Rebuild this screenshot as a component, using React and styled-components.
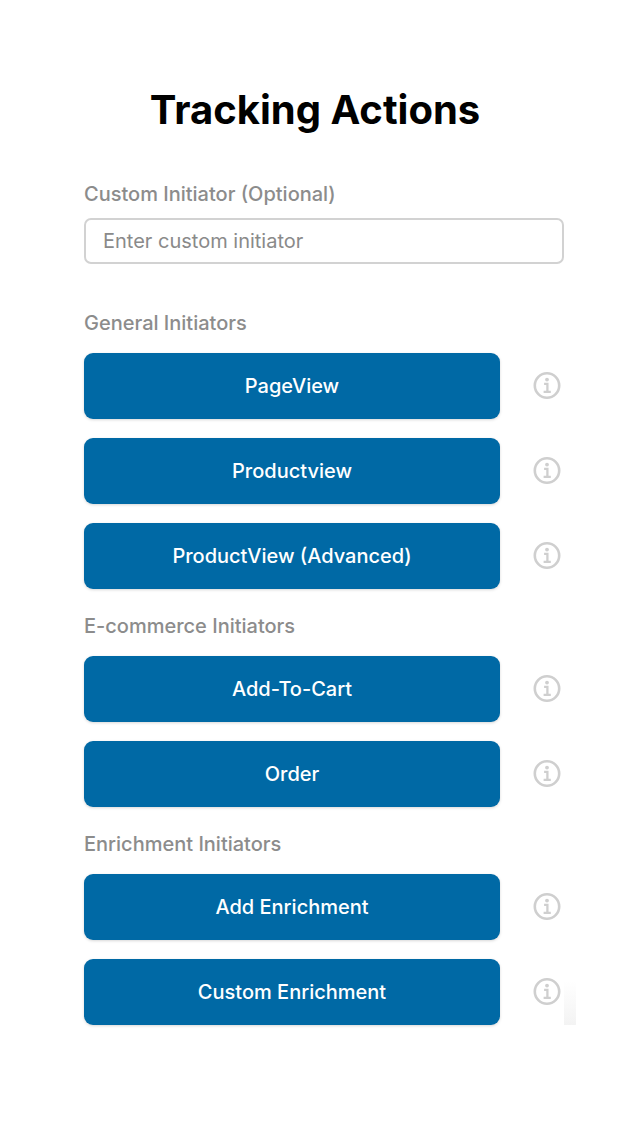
import React from 'react'
import styled, { createGlobalStyle } from 'styled-components'

const GlobalStyle = createGlobalStyle`
  * {
    box-sizing: border-box;
  }
  body {
    margin: 0;
    background: #fff;
    font-family: Inter, 'Liberation Sans', sans-serif;
  }
`

const Panel = styled.main`
  position: relative;
  margin: 0 64px 114px 72px;
  padding: 84px 12px 0;

  /* soft edge beside the last row */
  &::after {
    content: '';
    position: absolute;
    right: 0;
    bottom: 0;
    width: 12px;
    height: 44px;
    background: linear-gradient(#fff, #f3f3f3);
  }
`

const Title = styled.h1`
  margin: 0 18px 43px 0;
  font-size: 40px;
  line-height: 52px;
  font-weight: 700;
  text-align: center;
  color: #000;
`

const Label = styled.label`
  display: block;
  font-size: 20px;
  line-height: 30px;
  font-weight: 500;
  color: #8c8c8c;
`

const Input = styled.input`
  display: block;
  width: 100%;
  height: 46px;
  margin: 9px 0 0;
  padding: 0 17px;
  border: 2px solid #d2d2d2;
  border-radius: 7px;
  background: #fff;
  font-family: inherit;
  font-size: 20px;
  color: #333;

  &::placeholder {
    color: #8a8a8a;
    opacity: 1;
  }
`

const Groups = styled.div`
  display: grid;
  gap: 22px;
  margin-top: 44px;
`

const Group = styled.section`
  display: grid;
  gap: 19px;
`

const GroupTitle = styled.h2`
  margin: 0 0 -4px;
  font-size: 20px;
  line-height: 30px;
  font-weight: 500;
  color: #8c8c8c;
`

const Row = styled.div`
  display: flex;
  align-items: center;
  gap: 33px;
  padding-right: 3px;
`

const ActionButton = styled.button`
  flex: 1;
  height: 66px;
  padding: 0 16px;
  border: 0;
  border-radius: 9px;
  background: #0069a5;
  box-shadow: 0 1px 3px rgba(0, 0, 0, 0.16);
  font-family: inherit;
  font-size: 20px;
  font-weight: 500;
  color: #fff;
  cursor: pointer;
`

const InfoButton = styled.button`
  flex: none;
  width: 28px;
  height: 28px;
  padding: 0;
  border: 0;
  background: none;
  color: #cfcfcf;
  cursor: pointer;

  svg {
    display: block;
  }
`

const groups = [
  {
    title: 'General Initiators',
    actions: ['PageView', 'Productview', 'ProductView (Advanced)']
  },
  {
    title: 'E-commerce Initiators',
    actions: ['Add-To-Cart', 'Order']
  },
  {
    title: 'Enrichment Initiators',
    actions: ['Add Enrichment', 'Custom Enrichment']
  }
]

const InfoIcon = () => (
  <svg width="28" height="28" viewBox="0 0 28 28" fill="none" aria-hidden="true">
    <circle cx="14" cy="13.5" r="12.2" stroke="currentColor" strokeWidth="2.6" />
    <circle cx="14" cy="7.6" r="1.9" fill="currentColor" />
    <path
      d="M11.1 11.8h3.3v8M10.6 19.8h7.2"
      stroke="currentColor"
      strokeWidth="2.3"
    />
  </svg>
)

const Action = ({ name }) => (
  <Row>
    <ActionButton type="button">{name}</ActionButton>
    <InfoButton type="button" aria-label={`About ${name}`}>
      <InfoIcon />
    </InfoButton>
  </Row>
)

export default function App() {
  return (
    <>
      <GlobalStyle />
      <Panel>
        <Title>Tracking Actions</Title>
        <Label htmlFor="initiator">Custom Initiator (Optional)</Label>
        <Input id="initiator" type="text" placeholder="Enter custom initiator" />
        <Groups>
          {groups.map(group => (
            <Group key={group.title}>
              <GroupTitle>{group.title}</GroupTitle>
              {group.actions.map(name => (
                <Action key={name} name={name} />
              ))}
            </Group>
          ))}
        </Groups>
      </Panel>
    </>
  )
}
